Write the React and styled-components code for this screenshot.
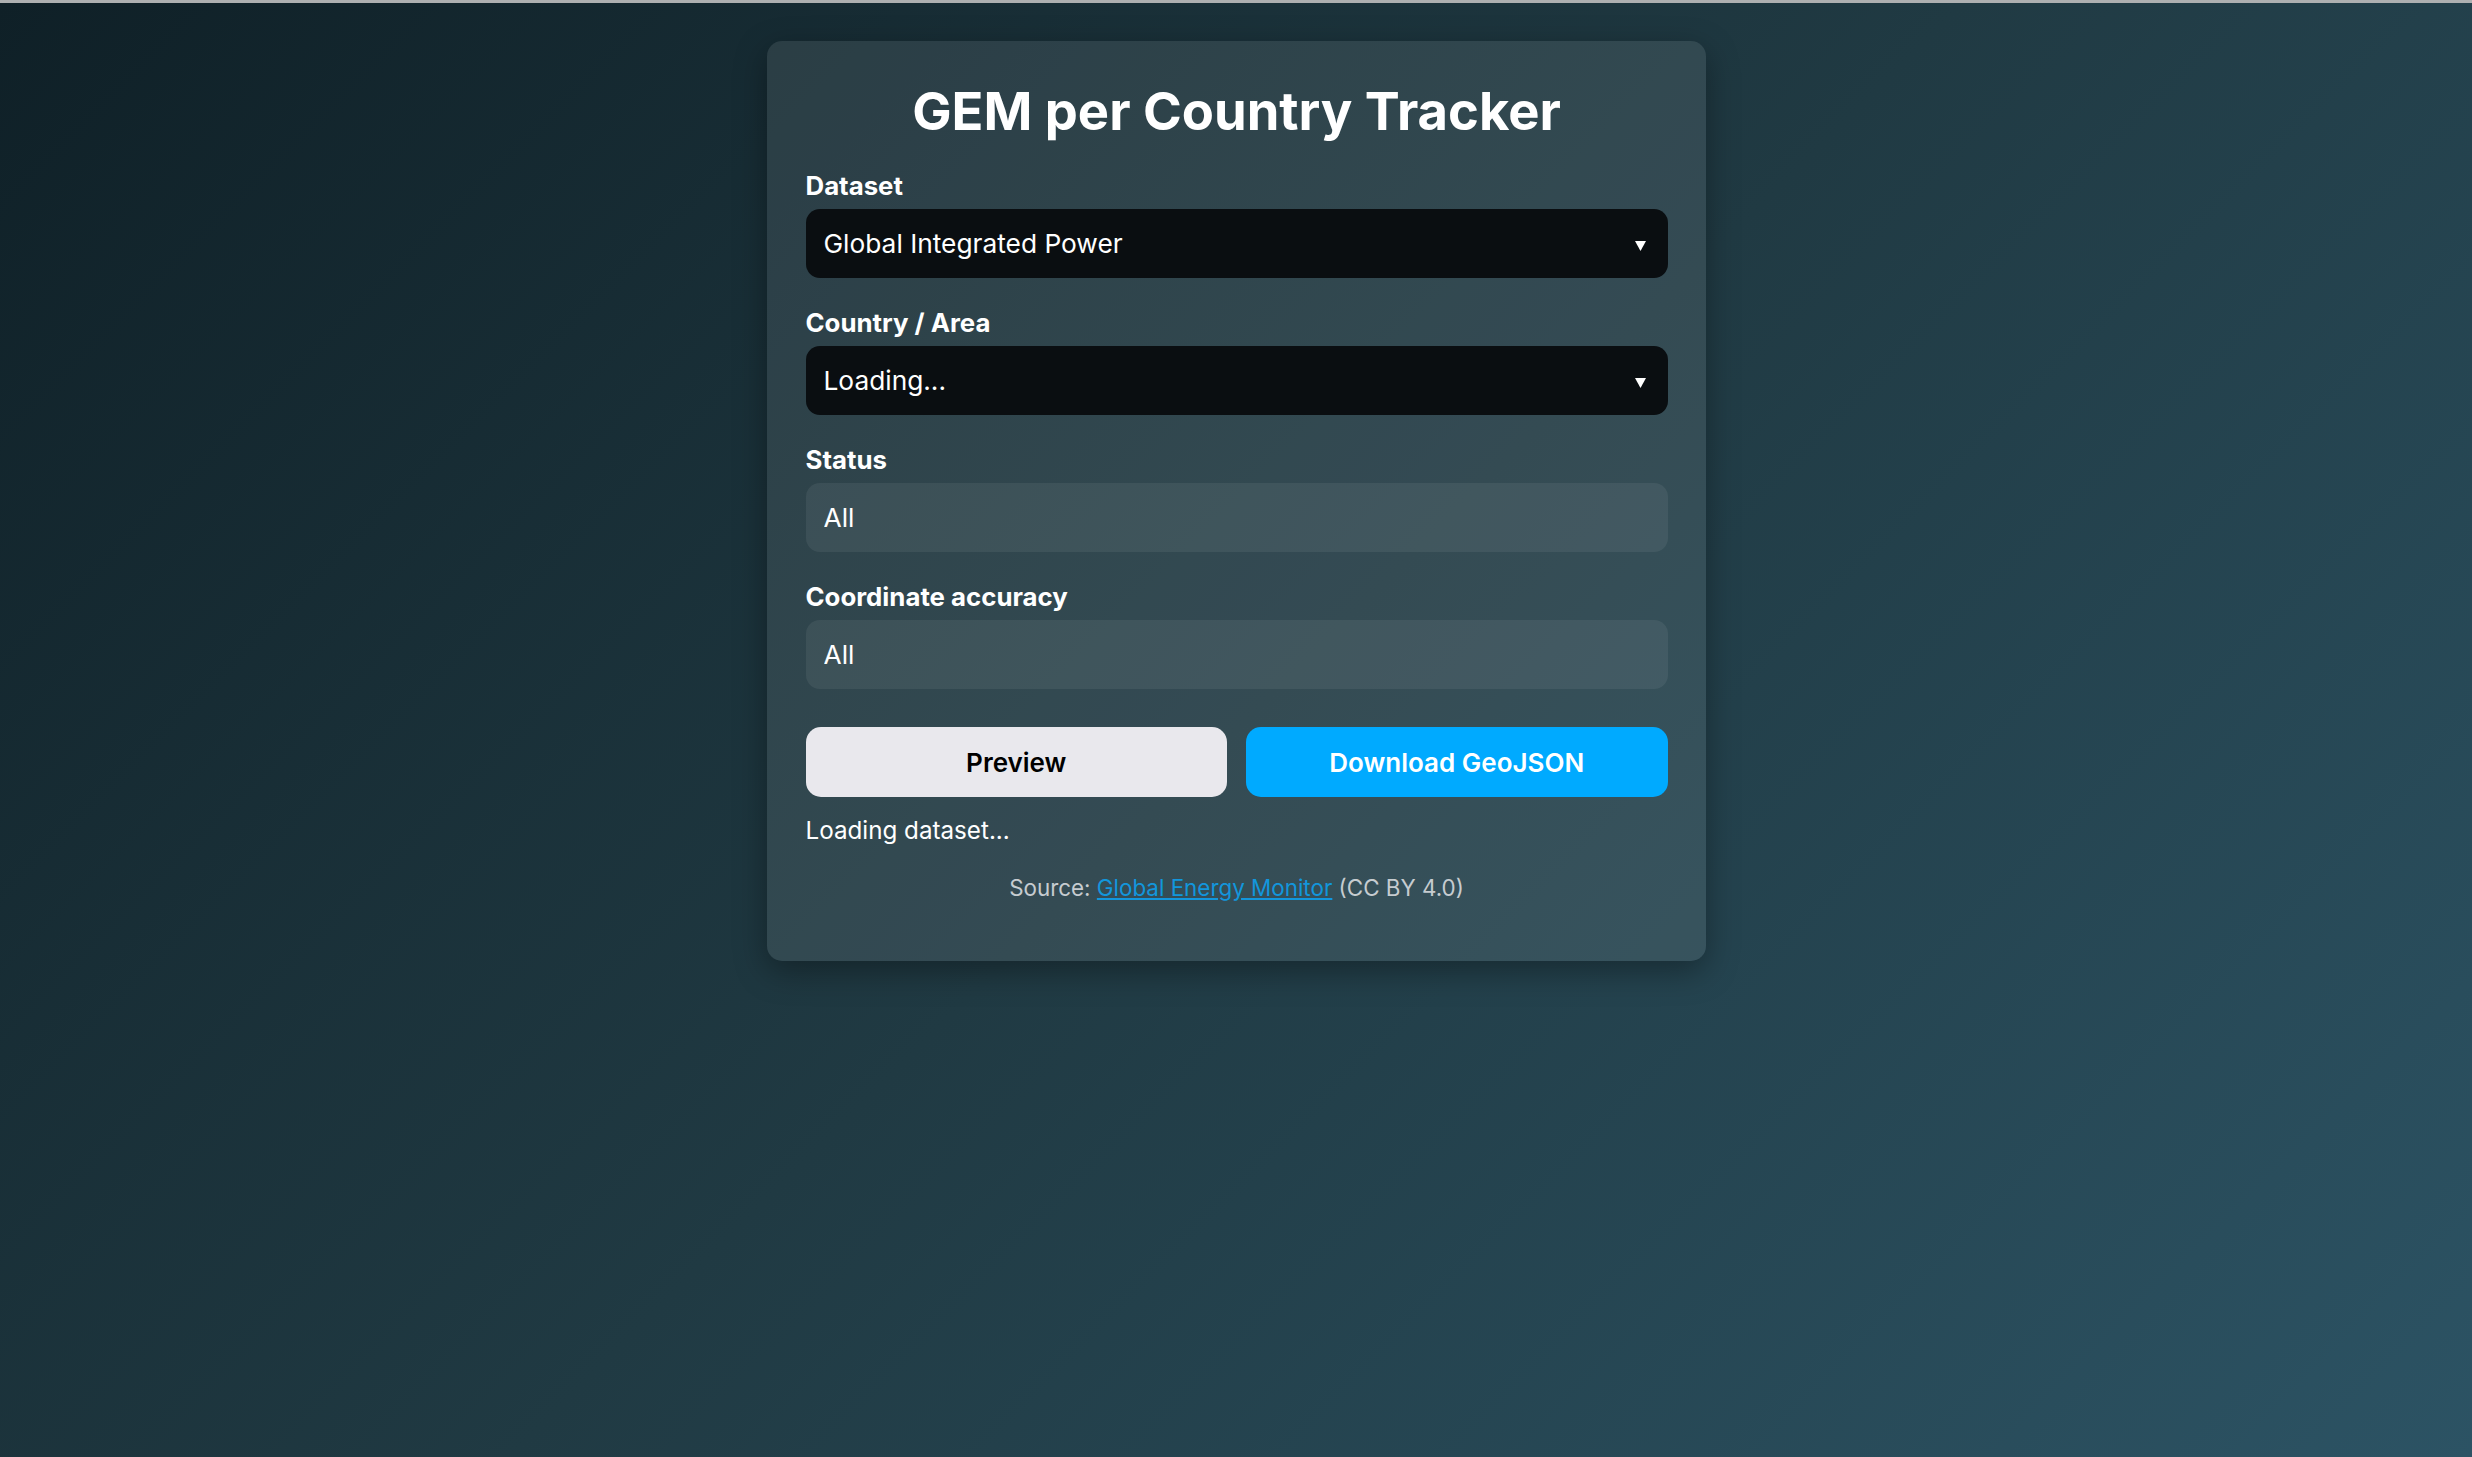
import React from 'react';
import styled, { createGlobalStyle } from 'styled-components';

const GlobalStyle = createGlobalStyle`
  html, body {
    margin: 0;
    padding: 0;
  }
  body {
    background: #aeb0b1;
    padding-top: 3px;
    font-family: Inter, "Noto Sans", "Liberation Sans", sans-serif;
    color: #ffffff;
  }
  * {
    box-sizing: border-box;
  }
`;

const Page = styled.div`
  min-height: calc(100vh - 3px);
  background: linear-gradient(135deg, #0f2027 0%, #203a43 50%, #2c5364 100%);
  padding-top: 38px;
`;

const Card = styled.main`
  width: 939px;
  margin: 0 auto;
  padding: 38px 38px 60px 39px;
  border-radius: 15px;
  background: rgba(255, 255, 255, 0.09);
  box-shadow: 0 10px 32px rgba(0, 0, 0, 0.35);
`;

const Title = styled.h1`
  margin: 0 0 28px;
  font-size: 52.5px;
  line-height: 64px;
  font-weight: 700;
  text-align: center;
  color: #ffffff;
`;

const Field = styled.div`
  margin-bottom: 30px;
`;

const Label = styled.label`
  display: block;
  margin-bottom: 8px;
  font-size: 25.8px;
  line-height: 30px;
  font-weight: 700;
  color: #ffffff;
`;

const SelectWrap = styled.div`
  position: relative;
`;

const Select = styled.select`
  display: block;
  width: 100%;
  height: 69px;
  padding: 0 18px;
  border: none;
  border-radius: 14px;
  appearance: none;
  -webkit-appearance: none;
  outline: none;
  font-family: inherit;
  font-size: 26.3px;
  color: #ffffff;
  background: ${(p) => (p.$dark ? '#0a0e11' : 'rgba(255, 255, 255, 0.065)')};
`;

const Arrow = styled.svg`
  position: absolute;
  right: 22px;
  top: 32px;
  width: 11px;
  height: 10px;
  pointer-events: none;
`;

const Actions = styled.div`
  display: grid;
  grid-template-columns: 1fr 1fr;
  gap: 19px;
  margin-top: 38px;
`;

const Button = styled.button`
  height: 70px;
  border: none;
  border-radius: 15px;
  font-family: inherit;
  font-size: 26px;
  font-weight: 600;
  cursor: pointer;
  color: ${(p) => (p.$primary ? '#ffffff' : '#000000')};
  background: ${(p) => (p.$primary ? '#00aaff' : '#e9e8ed')};
`;

const StatusText = styled.p`
  margin: 19px 0 0;
  font-size: 24.2px;
  line-height: 30px;
  color: #ffffff;
`;

const Source = styled.p`
  margin: 28px 0 0;
  font-size: 22.4px;
  line-height: 27px;
  text-align: center;
  color: #c6ccd0;

  a {
    color: #1296dc;
    text-decoration: underline;
  }
`;

function SelectField({ label, value, dark }) {
  return (
    <Field>
      <Label>{label}</Label>
      <SelectWrap>
        <Select $dark={dark} defaultValue={value}>
          <option>{value}</option>
        </Select>
        {dark && (
          <Arrow viewBox='0 0 11 10'>
            <polygon points='0,0 11,0 5.5,10' fill='#ffffff' />
          </Arrow>
        )}
      </SelectWrap>
    </Field>
  );
}

export default function App() {
  return (
    <Page>
      <GlobalStyle />
      <Card>
        <Title>GEM per Country Tracker</Title>
        <SelectField label='Dataset' value='Global Integrated Power' dark />
        <SelectField label='Country / Area' value='Loading...' dark />
        <SelectField label='Status' value='All' />
        <SelectField label='Coordinate accuracy' value='All' />
        <Actions>
          <Button>Preview</Button>
          <Button $primary>Download GeoJSON</Button>
        </Actions>
        <StatusText>Loading dataset...</StatusText>
        <Source>
          Source: <a href='#gem'>Global Energy Monitor</a> (CC BY 4.0)
        </Source>
      </Card>
    </Page>
  );
}
